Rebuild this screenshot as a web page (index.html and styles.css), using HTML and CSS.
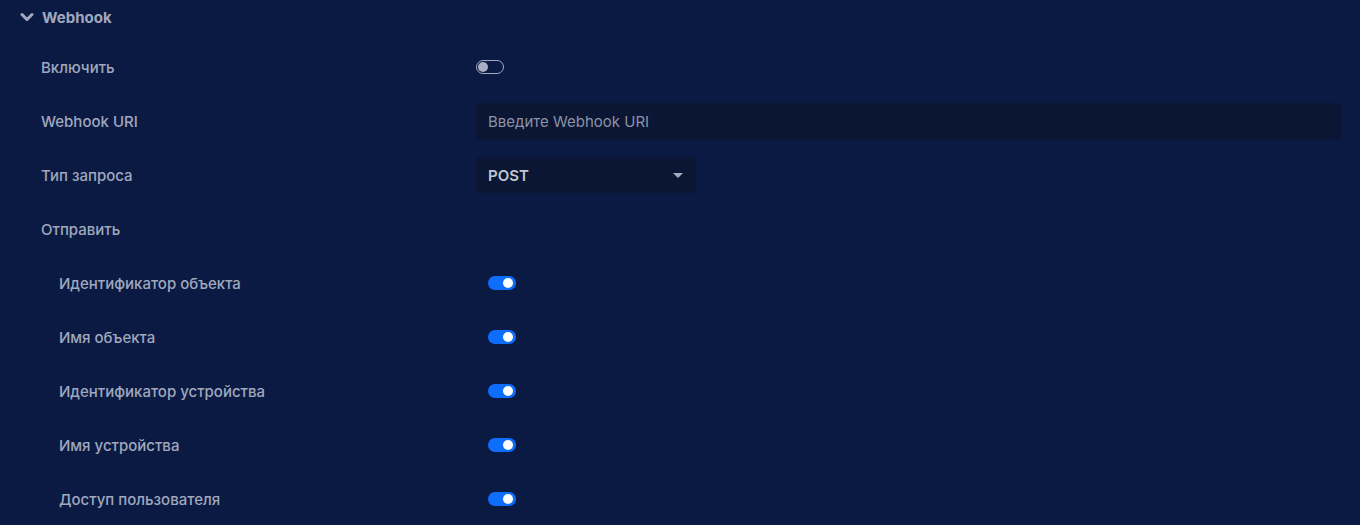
FILE: index.html
```html
<!DOCTYPE html>
<html lang="ru">
<head>
<meta charset="utf-8">
<link rel="stylesheet" href="styles.css">
</head>
<body>
<div class="panel">
  <div class="head">
    <svg class="chev" width="14" height="10" viewBox="0 0 14 10"><path d="M2 2.5 L7 7.5 L12 2.5" fill="none" stroke="#a3abc0" stroke-width="3" stroke-linecap="round" stroke-linejoin="round"/></svg>
    <span>Webhook</span>
  </div>
  <div class="row">
    <div class="label">Включить</div>
    <div class="ctl"><span class="toggle off"></span></div>
  </div>
  <div class="row">
    <div class="label">Webhook URI</div>
    <div class="ctl"><div class="input">Введите Webhook URI</div></div>
  </div>
  <div class="row">
    <div class="label">Тип запроса</div>
    <div class="ctl"><div class="select"><span>POST</span><span class="caret"></span></div></div>
  </div>
  <div class="row">
    <div class="label">Отправить</div>
  </div>
  <div class="row sub">
    <div class="label">Идентификатор объекта</div>
    <div class="ctl"><span class="toggle on"></span></div>
  </div>
  <div class="row sub">
    <div class="label">Имя объекта</div>
    <div class="ctl"><span class="toggle on"></span></div>
  </div>
  <div class="row sub">
    <div class="label">Идентификатор устройства</div>
    <div class="ctl"><span class="toggle on"></span></div>
  </div>
  <div class="row sub">
    <div class="label">Имя устройства</div>
    <div class="ctl"><span class="toggle on"></span></div>
  </div>
  <div class="row sub">
    <div class="label">Доступ пользователя</div>
    <div class="ctl"><span class="toggle on"></span></div>
  </div>
</div>
</body>
</html>
```
FILE: styles.css
```css
html, body {
  margin: 0;
  padding: 0;
  background: #0b1a43;
  height: 525px;
  overflow: hidden;
}
body {
  font-family: "Inter", "Noto Sans", sans-serif;
  color: #a0a8be;
  font-size: 15px;
}
.panel {
  display: flex;
  flex-direction: column;
  padding-right: 19px;
}
.head {
  height: 34px;
  margin-bottom: 6px;
  display: flex;
  align-items: center;
  padding-left: 20px;
  gap: 8px;
  font-weight: 700;
  font-size: 15px;
}
.chev { display: block; }
.row {
  height: 54px;
  display: flex;
  align-items: center;
  padding-left: 41px;
}
.label {
  width: 435px;
  flex: none;
  font-weight: 500;
}
.ctl {
  flex: 1;
  display: flex;
  align-items: center;
}
.row.sub { padding-left: 59px; }
.row.sub .label { width: 417px; }
.row.sub .ctl { padding-left: 12px; }
.toggle {
  display: block;
  width: 28px;
  height: 14px;
  border-radius: 8px;
  box-sizing: border-box;
  position: relative;
}
.toggle.off {
  border: 1px solid #a3abc0;
}
.toggle.off::after {
  content: "";
  position: absolute;
  left: 1px;
  top: 1px;
  width: 10px;
  height: 10px;
  border-radius: 50%;
  background: #a9afc0;
}
.toggle.on {
  background: #0d6efd;
}
.toggle.on::after {
  content: "";
  position: absolute;
  right: 3px;
  top: 2px;
  width: 10px;
  height: 10px;
  border-radius: 50%;
  background: #fff;
}
.input {
  flex: 1;
  height: 37px;
  background: #0a1633;
  border-radius: 4px;
  display: flex;
  align-items: center;
  padding-left: 12px;
  color: #8c93a6;
  font-weight: 400;
}
.select {
  width: 220px;
  height: 36px;
  background: #0a1633;
  border-radius: 4px;
  display: flex;
  align-items: center;
  justify-content: space-between;
  padding: 0 12px;
  box-sizing: border-box;
  font-weight: 600;
  color: #c0c6d4;
}
.caret {
  width: 0;
  height: 0;
  border-left: 5px solid transparent;
  border-right: 5px solid transparent;
  border-top: 5px solid #a3abc0;
  margin-right: 1px;
}
```
